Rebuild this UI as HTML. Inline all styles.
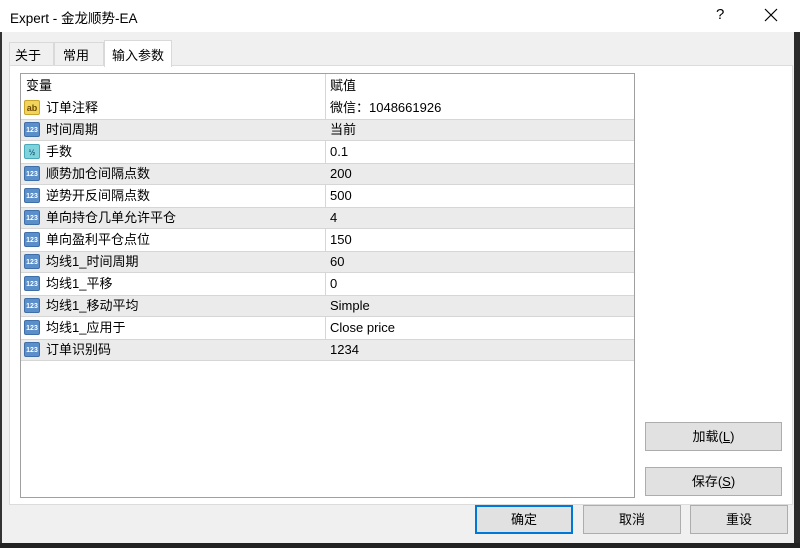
<!DOCTYPE html>
<html><head><meta charset="utf-8"><style>
*{margin:0;padding:0;box-sizing:border-box}
body{width:800px;height:548px;background:#f0f0f0;font-family:"Liberation Sans","Noto Sans CJK SC",sans-serif;font-size:13px;color:#000;position:relative;overflow:hidden}
.abs{position:absolute}
.title{left:0;top:0;width:800px;height:32px;background:#fff}
.tab{top:42px;height:23px;border:1px solid #d9d9d9;border-bottom:none;background:#f0f0f0;padding:2px 0 0 5px}
.panel{left:9px;top:65px;width:784px;height:440px;background:#fff;border:1px solid #dcdcdc}
.list{left:20px;top:73px;width:615px;height:425px;border:1px solid #a0a0a0;background:#fff}
.row{position:absolute;left:0;width:613px;height:22px;line-height:22px}
.row.g{background:#ebebeb;border-top:1px solid #d6d6d6;border-bottom:1px solid #d6d6d6;line-height:20px}
.n{position:absolute;left:25px}
.v{position:absolute;left:309px}
.div{position:absolute;left:304px;top:0;width:1px;height:287px;background:#d6d6d6}
.ic{position:absolute;left:3px;top:3px;width:16px;height:15px;border-radius:2px;font-size:7px;font-weight:bold;line-height:15px;text-align:center}
.g .ic{top:2px}
.i1{background:#5b8fc9;color:#fff;border:1px solid #3f6fa8}
.btn{background:#e1e1e1;border:1px solid #adadad;text-align:center;line-height:27px;height:29px}
</style></head><body>
<div class="abs title"></div>
<div class="abs" style="left:10px;top:7px;font-size:13.5px">Expert - 金龙顺势-EA</div>
<div class="abs" style="left:716px;top:6px;font-size:15px">?</div>
<svg class="abs" style="left:764px;top:8px" width="14" height="14"><path d="M1 1L13 13M13 1L1 13" stroke="#000" stroke-width="1.2"/></svg>
<div class="abs" style="left:0;top:32px;width:2px;height:516px;background:#333"></div>
<div class="abs" style="left:794px;top:32px;width:6px;height:516px;background:#2b2b2b"></div>
<div class="abs" style="left:0;top:543px;width:800px;height:5px;background:#222"></div>
<div class="abs tab" style="left:9px;width:45px">关于</div>
<div class="abs tab" style="left:54px;width:50px;padding-left:8px">常用</div>
<div class="abs" style="left:104px;top:40px;width:68px;height:27px;background:#fff;border:1px solid #d9d9d9;border-bottom:none;padding:4px 0 0 7px;z-index:2">输入参数</div>
<div class="abs panel"></div>
<div class="abs list">
<div class="row" style="top:1px"><span style="position:absolute;left:5px">变量</span><span class="v">赋值</span></div>
<div class="div"></div>
<div class="row" style="top:23px"><span class="ic" style="background:#f2d45c;color:#6b4a00;border:1px solid #c9a42a;font-size:9px">ab</span><span class="n">订单注释</span><span class="v">微信：1048661926</span></div>
<div class="row g" style="top:45px"><span class="ic i1">123</span><span class="n">时间周期</span><span class="v">当前</span></div>
<div class="row" style="top:67px"><span class="ic" style="background:#7fd3dc;color:#1d5a7a;border:1px solid #4aa9b8;font-size:8px">½</span><span class="n">手数</span><span class="v">0.1</span></div>
<div class="row g" style="top:89px"><span class="ic i1">123</span><span class="n">顺势加仓间隔点数</span><span class="v">200</span></div>
<div class="row" style="top:111px"><span class="ic i1">123</span><span class="n">逆势开反间隔点数</span><span class="v">500</span></div>
<div class="row g" style="top:133px"><span class="ic i1">123</span><span class="n">单向持仓几单允许平仓</span><span class="v">4</span></div>
<div class="row" style="top:155px"><span class="ic i1">123</span><span class="n">单向盈利平仓点位</span><span class="v">150</span></div>
<div class="row g" style="top:177px"><span class="ic i1">123</span><span class="n">均线1_时间周期</span><span class="v">60</span></div>
<div class="row" style="top:199px"><span class="ic i1">123</span><span class="n">均线1_平移</span><span class="v">0</span></div>
<div class="row g" style="top:221px"><span class="ic i1">123</span><span class="n">均线1_移动平均</span><span class="v">Simple</span></div>
<div class="row" style="top:243px"><span class="ic i1">123</span><span class="n">均线1_应用于</span><span class="v">Close price</span></div>
<div class="row g" style="top:265px"><span class="ic i1">123</span><span class="n">订单识别码</span><span class="v">1234</span></div>
</div>
<div class="abs btn" style="left:645px;top:422px;width:137px">加载(<u>L</u>)</div>
<div class="abs btn" style="left:645px;top:467px;width:137px">保存(<u>S</u>)</div>
<div class="abs btn" style="left:475px;top:505px;width:98px;border:2px solid #0078d7;line-height:25px">确定</div>
<div class="abs btn" style="left:583px;top:505px;width:98px">取消</div>
<div class="abs btn" style="left:690px;top:505px;width:98px">重设</div>
</body></html>
